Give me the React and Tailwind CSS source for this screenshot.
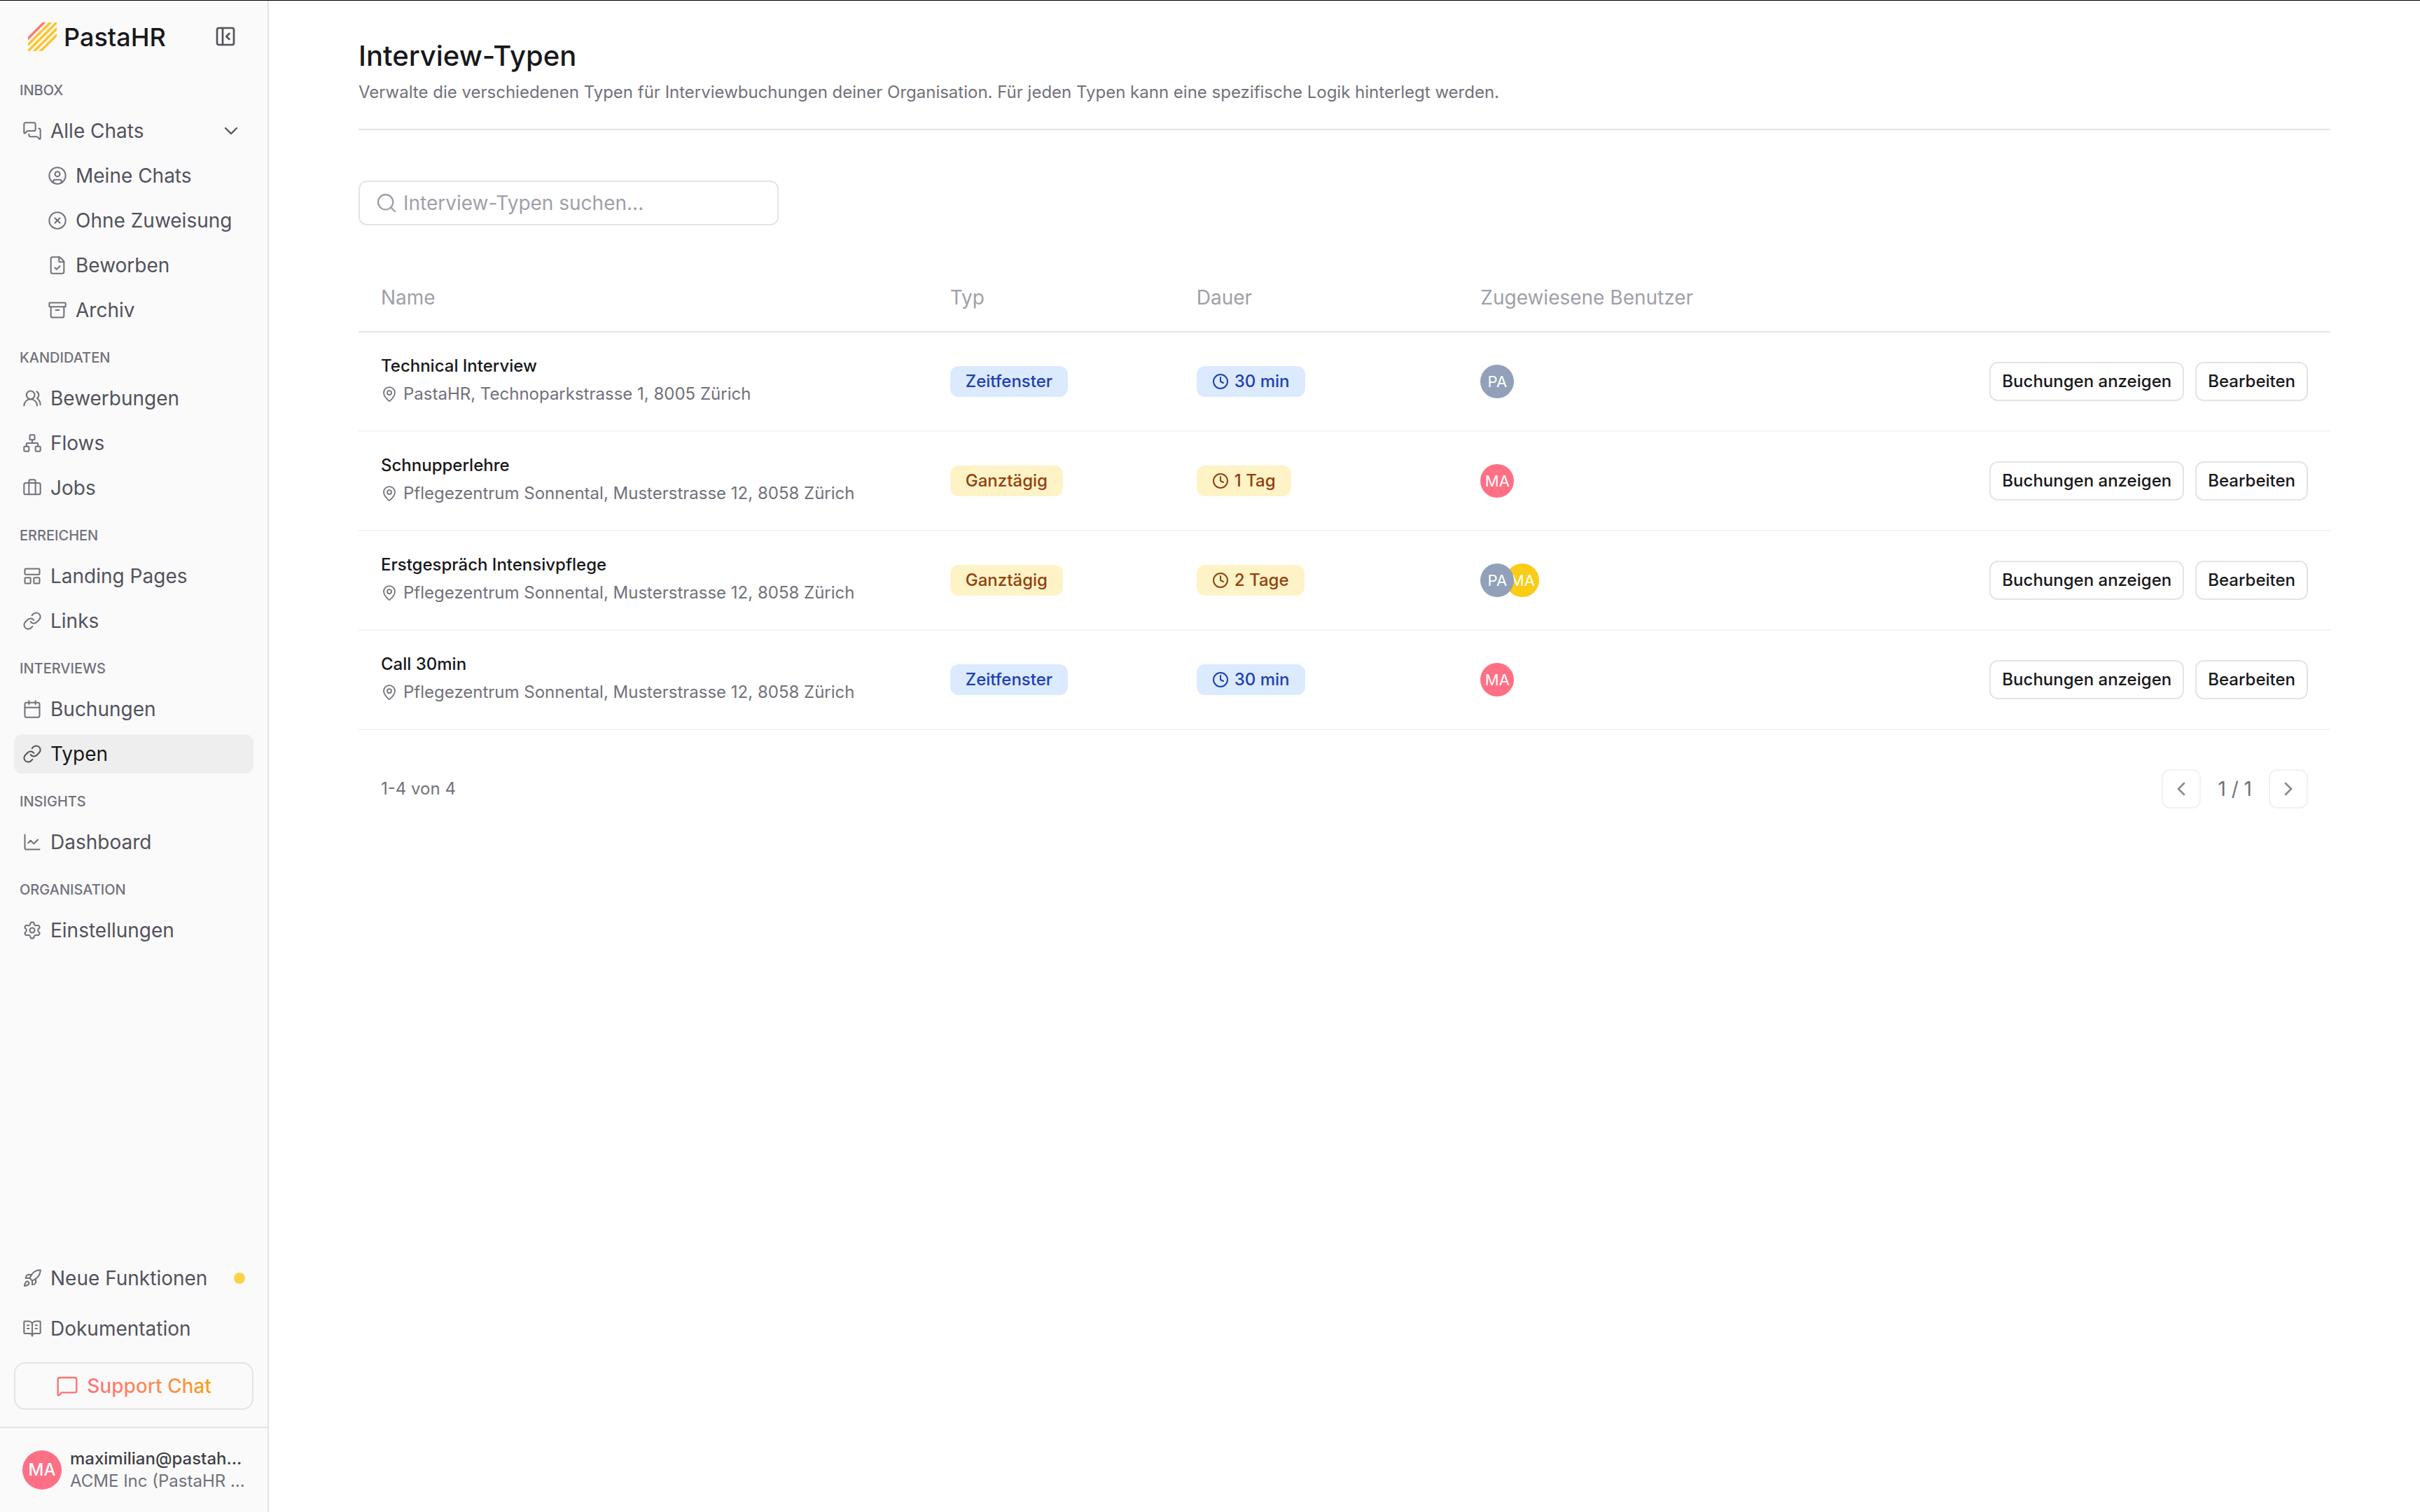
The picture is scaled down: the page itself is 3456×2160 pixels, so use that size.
import {
  Archive, BookOpenText, Briefcase, Calendar, ChartLine, ChevronDown, ChevronLeft,
  ChevronRight, CircleUser, CircleX, Clock, FileCheck, LayoutPanelTop, Link, MapPin,
  MessageSquare, MessagesSquare, Network, PanelLeftClose, Rocket, Search, Settings, UsersRound,
} from "lucide-react";
import { useState } from "react";

const sections = [
  {
    title: "INBOX",
    items: [
      { label: "Alle Chats", icon: MessagesSquare, open: true },
      { label: "Meine Chats", icon: CircleUser, sub: true },
      { label: "Ohne Zuweisung", icon: CircleX, sub: true },
      { label: "Beworben", icon: FileCheck, sub: true },
      { label: "Archiv", icon: Archive, sub: true },
    ],
  },
  {
    title: "KANDIDATEN",
    items: [
      { label: "Bewerbungen", icon: UsersRound },
      { label: "Flows", icon: Network },
      { label: "Jobs", icon: Briefcase },
    ],
  },
  {
    title: "ERREICHEN",
    items: [
      { label: "Landing Pages", icon: LayoutPanelTop },
      { label: "Links", icon: Link },
    ],
  },
  {
    title: "INTERVIEWS",
    items: [
      { label: "Buchungen", icon: Calendar },
      { label: "Typen", icon: Link, active: true },
    ],
  },
  { title: "INSIGHTS", items: [{ label: "Dashboard", icon: ChartLine }] },
  { title: "ORGANISATION", items: [{ label: "Einstellungen", icon: Settings }] },
];

const sonnental = "Pflegezentrum Sonnental, Musterstrasse 12, 8058 Zürich";

const PA = { initials: "PA", color: "bg-slate-400" };
const MA = { initials: "MA", color: "bg-[#ff7086]" };
const MA_YELLOW = { initials: "MA", color: "bg-[#facc15]" };

const rows = [
  { name: "Technical Interview", place: "PastaHR, Technoparkstrasse 1, 8005 Zürich", type: "Zeitfenster", duration: "30 min", users: [PA] },
  { name: "Schnupperlehre", place: sonnental, type: "Ganztägig", duration: "1 Tag", users: [MA] },
  { name: "Erstgespräch Intensivpflege", place: sonnental, type: "Ganztägig", duration: "2 Tage", users: [PA, MA_YELLOW] },
  { name: "Call 30min", place: sonnental, type: "Zeitfenster", duration: "30 min", users: [MA] },
];

const badgeColors = {
  Zeitfenster: "bg-[#dbeafe] text-[#1e40af]",
  Ganztägig: "bg-[#fef3c7] text-[#92400e]",
};

const Logo = () => (
  <a href="#" className="flex items-center gap-[10px]">
    <svg viewBox="0 0 41 41" className="size-[41px]" fill="none" strokeWidth="3.6">
      <path d="M-2 25 25 -2" stroke="#fb7a75" />
      <path d="M-2 34 34 -2M-2 43 43 -2M-2 52 52 -2M-2 61 61 -2" stroke="#ffc42e" />
    </svg>
    <span className="pt-[2px] text-[36px] leading-10 font-medium text-zinc-900">PastaHR</span>
  </a>
);

const NavItem = ({ label, icon: Icon, sub, active, open, dot }) => (
  <a
    href="#"
    className={`flex h-14 items-center gap-3 rounded-xl pr-3 text-[28px] ${sub ? "pl-12" : "pl-3"} ${
      active ? "bg-[#eeeeee] text-zinc-900" : "text-zinc-600"
    }`}
  >
    <Icon className={`size-7 shrink-0 ${active ? "text-zinc-600" : "text-zinc-500"}`} strokeWidth={1.75} />
    <span className="flex-1 whitespace-nowrap">{label}</span>
    {open && <ChevronDown className="mr-1 size-8" strokeWidth={1.75} />}
    {dot && <span className="size-4 rounded-full bg-[#fdd147]" />}
  </a>
);

const Sidebar = () => (
  <aside className="flex w-96 shrink-0 flex-col border-r-2 border-zinc-200 bg-[#fafafa]">
    <div className="flex items-center justify-between pt-[30px] pr-11 pb-[38px] pl-10">
      <Logo />
      <button type="button" aria-label="Seitenleiste schliessen" className="text-zinc-600">
        <PanelLeftClose className="size-8" strokeWidth={2} />
      </button>
    </div>

    <nav className="flex flex-1 flex-col gap-[22px] px-5">
      {sections.map((section) => (
        <div key={section.title}>
          <h2 className="mb-[14px] pt-[2px] pl-2 text-[20px] leading-8 font-medium text-zinc-500">{section.title}</h2>
          <div className="flex flex-col gap-2">
            {section.items.map((item) => (
              <NavItem key={item.label} {...item} />
            ))}
          </div>
        </div>
      ))}
    </nav>

    <div className="flex flex-col gap-4 px-5 pb-6">
      <NavItem label="Neue Funktionen" icon={Rocket} dot />
      <NavItem label="Dokumentation" icon={BookOpenText} />
      <button type="button" className="mt-1 flex h-[68px] items-center justify-center gap-3 rounded-2xl border-2 border-zinc-200 text-[28px] font-medium">
        <MessageSquare className="size-8 text-[#ff7070]" strokeWidth={1.75} />
        <span className="bg-linear-to-r from-[#ff7077] to-[#f99d10] bg-clip-text text-transparent">Support Chat</span>
      </button>
    </div>

    <div className="flex items-center gap-3 border-t-2 border-zinc-200 px-8 py-7">
      <span className="flex size-14 shrink-0 items-center justify-center rounded-full bg-[#ff7086] text-[24px] font-medium text-white">MA</span>
      <div className="text-[24px] leading-8 whitespace-nowrap">
        <p className="font-medium text-zinc-700">maximilian@pastah...</p>
        <p className="text-zinc-500">ACME Inc (PastaHR ...</p>
      </div>
    </div>
  </aside>
);

const RowButton = ({ children }) => (
  <button type="button" className="h-14 rounded-xl border-2 border-zinc-200 px-4 text-[24px] font-medium text-zinc-900">
    {children}
  </button>
);

const PageButton = ({ label, icon: Icon }) => (
  <button type="button" disabled aria-label={label} className="flex size-14 items-center justify-center rounded-xl border-2 border-zinc-200 text-zinc-900 opacity-50">
    <Icon className="size-8" strokeWidth={2} />
  </button>
);

const TypesTable = () => (
  <table className="w-full table-fixed text-left">
    <thead>
      <tr className="h-[98px] border-b-2 border-zinc-200 text-[28px] text-zinc-400">
        <th className="w-[30%] pl-8 font-normal">Name</th>
        <th className="w-[12.5%] font-normal">Typ</th>
        <th className="w-[14.4%] font-normal">Dauer</th>
        <th className="font-normal">Zugewiesene Benutzer</th>
        <th aria-label="Aktionen" />
      </tr>
    </thead>
    <tbody>
      {rows.map((row) => (
        <tr key={row.name} className="h-[142px] border-b-2 border-zinc-100 text-[24px]">
          <td className="pb-1 pl-8 leading-10">
            <p className="font-medium text-zinc-900">{row.name}</p>
            <p className="flex items-center gap-2 text-zinc-500">
              <MapPin className="size-6 shrink-0" strokeWidth={1.75} />
              {row.place}
            </p>
          </td>
          <td>
            <span className={`inline-flex h-11 items-center rounded-xl px-[22px] align-middle font-medium ${badgeColors[row.type]}`}>
              {row.type}
            </span>
          </td>
          <td>
            <span className={`inline-flex h-11 items-center gap-2 rounded-xl px-[22px] align-middle font-medium ${badgeColors[row.type]}`}>
              <Clock className="size-6" strokeWidth={2} />
              {row.duration}
            </span>
          </td>
          <td>
            <div className="flex">
              {row.users.map((user, i) => (
                <span
                  key={i}
                  className={`relative flex size-12 items-center justify-center rounded-full text-[22px] text-white first:z-10 not-first:-ml-3 ${user.color}`}
                >
                  {user.initials}
                </span>
              ))}
            </div>
          </td>
          <td className="pr-8">
            <div className="flex justify-end gap-4">
              <RowButton>Buchungen anzeigen</RowButton>
              <RowButton>Bearbeiten</RowButton>
            </div>
          </td>
        </tr>
      ))}
    </tbody>
  </table>
);

const App = () => {
  const [search, setSearch] = useState("");

  return (
    <div className="flex min-h-screen border-t border-black bg-white font-['Inter',sans-serif]">
      <Sidebar />

      <main className="flex-1 px-32 pt-12">
        <header className="border-b-2 border-zinc-200 pb-[30px]">
          <h1 className="pt-px text-[40px] leading-[60px] font-medium text-zinc-900">Interview-Typen</h1>
          <p className="text-[24px] leading-11 text-zinc-500">
            Verwalte die verschiedenen Typen für Interviewbuchungen deiner Organisation. Für jeden Typen kann eine spezifische Logik hinterlegt werden.
          </p>
        </header>

        <label className="mt-[72px] flex h-16 w-[600px] items-center gap-2 rounded-xl border-2 border-zinc-200 px-[22px] text-zinc-400">
          <Search className="size-8" strokeWidth={1.75} />
          <input
            type="text"
            aria-label="Interview-Typen suchen"
            placeholder="Interview-Typen suchen..."
            value={search}
            onChange={(e) => setSearch(e.target.value)}
            className="min-w-0 flex-1 bg-transparent text-[28px] text-zinc-800 outline-none placeholder:text-zinc-400"
          />
        </label>

        <div className="mt-[54px]">
          <TypesTable />
        </div>

        <div className="mt-14 flex items-center justify-between px-8 text-zinc-500">
          <span className="text-[24px]">1-4 von 4</span>
          <div className="flex items-center gap-6">
            <PageButton label="Vorherige Seite" icon={ChevronLeft} />
            <span className="text-[28px]">1 / 1</span>
            <PageButton label="Nächste Seite" icon={ChevronRight} />
          </div>
        </div>
      </main>
    </div>
  );
};

export default App;
